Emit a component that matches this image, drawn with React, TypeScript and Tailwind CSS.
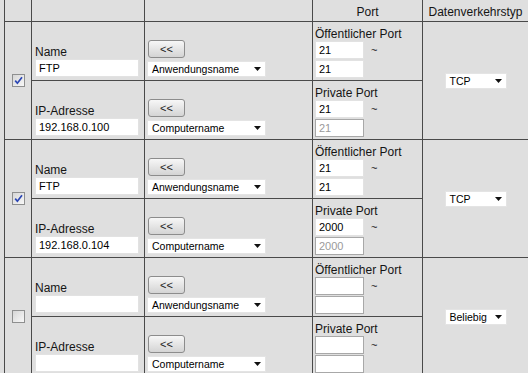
import React from 'react';

type Entry = {
  checked: boolean;
  name: string;
  ip: string;
  pubStart: string;
  pubEnd: string;
  privStart: string;
  privEnd: string;
  proto: string;
  blank?: boolean;
};

const entries: Entry[] = [
  { checked: true, name: 'FTP', ip: '192.168.0.100', pubStart: '21', pubEnd: '21', privStart: '21', privEnd: '21', proto: 'TCP' },
  { checked: true, name: 'FTP', ip: '192.168.0.104', pubStart: '21', pubEnd: '21', privStart: '2000', privEnd: '2000', proto: 'TCP' },
  { checked: false, name: '', ip: '', pubStart: '', pubEnd: '', privStart: '', privEnd: '', proto: 'Beliebig', blank: true },
];

const cell = 'border-l border-t border-[#4a4a4a] p-0';

const Arrow = () => (
  <svg width="7" height="4" viewBox="0 0 7 4" className="shrink-0">
    <path d="M0 0h7L3.5 4z" fill="#111" />
  </svg>
);

const FakeSelect = ({ label, width }: { label: string; width: string }) => (
  <div className={`flex items-center justify-between bg-white border border-[#e4e4e4] h-[16px] pl-[4px] pr-[4px] text-[10.5px] leading-[14px] text-black ${width}`}>
    <span>{label}</span>
    <Arrow />
  </div>
);

const Check = ({ on }: { on: boolean }) => (
  <div className="w-[13px] h-[13px] border border-[#8e8f8f] bg-gradient-to-br from-[#d6d6d6] to-[#f8f8f8] flex items-center justify-center">
    {on && (
      <svg width="9" height="9" viewBox="0 0 9 9">
        <path d="M1.2 4.6 L3.4 7.2 L8 1.2" stroke="#2b46b4" strokeWidth="1.7" fill="none" />
      </svg>
    )}
  </div>
);

const PickButton = () => (
  <div className="ml-px w-[37px] h-[18px] rounded-[3px] border border-[#8c8c8c] bg-gradient-to-b from-[#f7f7f7] to-[#d4d4d4] flex items-center justify-center text-[11px] leading-none text-[#222]">
    &lt;&lt;
  </div>
);

const TextBox = ({ value, width, dim, disabled }: { value: string; width: string; dim?: boolean; disabled?: boolean }) => (
  <input
    readOnly
    disabled={disabled}
    value={value}
    className={`block h-[18px] ${width} bg-white px-[3px] text-[11px] outline-none border ${
      disabled || dim ? 'border-[#a8a8a8]' : 'border-[#e2e2e2]'
    } ${disabled ? 'text-[#9a9a9a]' : 'text-black'}`}
  />
);

const PortCell = ({ label, from, to, blank, lock }: { label: string; from: string; to: string; blank?: boolean; lock?: boolean }) => (
  <td className={`${cell} align-bottom pl-[2px] pb-[2px]`}>
    <div className="text-[12px] leading-[14px]">{label}</div>
    <div className="flex items-center">
      <TextBox value={from} width="w-[49px]" dim={blank} />
      <span className="ml-[7px] text-[11px] leading-none">~</span>
    </div>
    <div className="mt-px">
      <TextBox value={to} width="w-[49px]" dim={blank} disabled={lock} />
    </div>
  </td>
);

export default function App() {
  return (
    <div className="w-[528px] h-[373px] overflow-hidden bg-[#dfdfdf] pl-[4px] text-[#151515] font-['Liberation_Sans',Arial,sans-serif]">
      <table className="table-fixed border-separate border-spacing-0 w-[524px]">
        <colgroup>
          <col className="w-[27px]" />
          <col className="w-[113px]" />
          <col className="w-[168px]" />
          <col className="w-[110px]" />
          <col className="w-[106px]" />
        </colgroup>
        <tbody>
          <tr>
            <td className="border-l border-[#4a4a4a] h-[21px] p-0" />
            <td className="border-l border-[#4a4a4a] p-0" />
            <td className="border-l border-[#4a4a4a] p-0" />
            <td className="border-l border-[#4a4a4a] p-0 pb-[2px] align-bottom text-center text-[12px] leading-[14px]">Port</td>
            <td className="border-l border-[#4a4a4a] p-0 pb-[2px] align-bottom text-center text-[12px] leading-[14px] whitespace-nowrap">
              Datenverkehrstyp
            </td>
          </tr>

          {entries.map((e, i) => (
            <React.Fragment key={i}>
              <tr>
                <td rowSpan={2} className={`${cell} align-middle`}>
                  <div className="flex justify-center">
                    <Check on={e.checked} />
                  </div>
                </td>
                <td className={`${cell} h-[59px] align-bottom pl-[3px] pb-[3px]`}>
                  <div className="text-[12px] leading-[14px]">Name</div>
                  <TextBox value={e.name} width="w-[104px]" />
                </td>
                <td className={`${cell} align-bottom pl-[2px] pb-[3px]`}>
                  <PickButton />
                  <div className="mt-[3px]">
                    <FakeSelect label="Anwendungsname" width="w-[119px]" />
                  </div>
                </td>
                <PortCell label="Öffentlicher Port" from={e.pubStart} to={e.pubEnd} blank={e.blank} />
                <td rowSpan={2} className={`${cell} align-middle`}>
                  <div className="flex justify-center">
                    <FakeSelect label={e.proto} width="w-[62px]" />
                  </div>
                </td>
              </tr>
              <tr>
                <td className={`${cell} h-[59px] align-bottom pl-[3px] pb-[3px]`}>
                  <div className="text-[12px] leading-[14px]">IP-Adresse</div>
                  <TextBox value={e.ip} width="w-[104px]" />
                </td>
                <td className={`${cell} align-bottom pl-[2px] pb-[3px]`}>
                  <PickButton />
                  <div className="mt-[3px]">
                    <FakeSelect label="Computername" width="w-[119px]" />
                  </div>
                </td>
                <PortCell label="Private Port" from={e.privStart} to={e.privEnd} blank={e.blank} lock={!e.blank} />
              </tr>
            </React.Fragment>
          ))}
        </tbody>
      </table>
    </div>
  );
}
